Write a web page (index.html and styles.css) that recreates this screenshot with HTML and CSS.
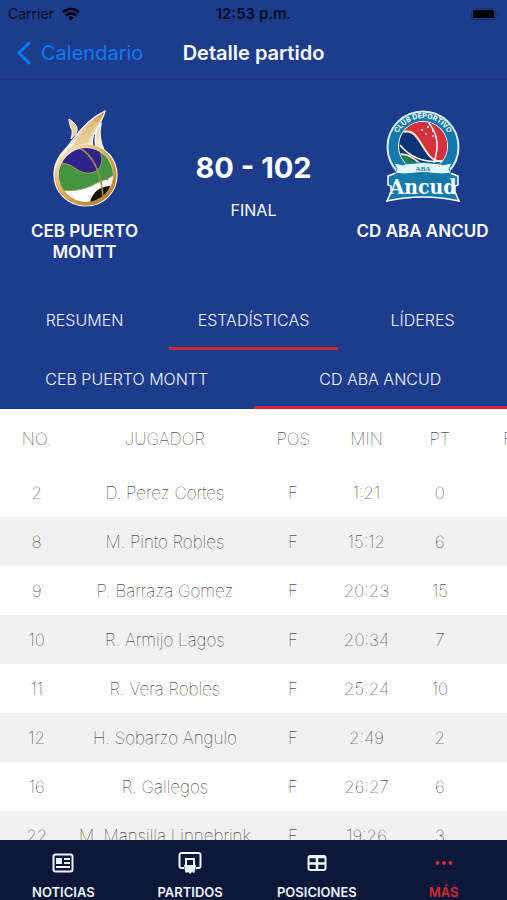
FILE: index.html
```html
<!DOCTYPE html>
<html lang="es">
  <head>
    <meta charset="utf-8">
    <meta name="viewport" content="width=device-width, initial-scale=1">
    <title>Detalle partido</title>
    <link rel="stylesheet" href="styles.css">
  </head>
  <body>
    <div class="status">
      <span class="carrier">Carrier
        <svg width="18" height="14" viewBox="0 0 18 14" fill="none" stroke="#000" stroke-width="2.6">
          <path d="M1 5.200a11.500 11.500 0 0 1 16 0M4 8.400a7.200 7.200 0 0 1 10 0"/>
          <path d="M9 13.500L6.200 10.600a4 4 0 0 1 5.600 0z" fill="#000" stroke="none"/>
        </svg>
      </span>
      <span class="clock">12:53 p.m.</span>
      <svg class="battery" width="28" height="12" viewBox="0 0 28 12">
        <rect x="0.500" y="0.500" width="24" height="11" rx="3" fill="none" stroke="#152c68"/>
        <rect x="2" y="2" width="21" height="8" rx="1.500" fill="#000"/>
        <path d="M26 4v4c1.500-.5 1.500-3.500 0-4z" fill="#152c68"/>
      </svg>
    </div>
    <header class="navbar">
      <a class="back" href="#">
        <svg width="14" height="24" viewBox="0 0 14 24" fill="none" stroke="#0a7bf5" stroke-width="3" stroke-linecap="round" stroke-linejoin="round">
          <path d="M12 2L2 12l10 10"/>
        </svg>
        Calendario
      </a>
      <h1>Detalle partido</h1>
    </header>

    <section class="match">
      <div class="team">
        <svg width="66" height="99" viewBox="0 0 66 99">
          <defs>
            <linearGradient id="flame" x1="0" y1="0" x2="0" y2="1">
              <stop offset="0" stop-color="#c08a3a"/>
              <stop offset="0.150" stop-color="#e3c78c"/>
              <stop offset="0.400" stop-color="#fdf8e8"/>
              <stop offset="0.600" stop-color="#f0dcae"/>
              <stop offset="0.800" stop-color="#c8923a"/>
              <stop offset="1" stop-color="#a8701c"/>
            </linearGradient>
            <linearGradient id="gold" x1="0" y1="0" x2="1" y2="1">
              <stop offset="0" stop-color="#fbf1d4"/>
              <stop offset="0.400" stop-color="#dcb668"/>
              <stop offset="1" stop-color="#b0781c"/>
            </linearGradient>
            <clipPath id="ball"><circle cx="34" cy="67" r="27"/></clipPath>
          </defs>
          <path d="M17 11c4 3 9 6 8 12-1 4-4 5-6 8 1-5 2-7 0-11-1-3-2-6-2-9z" fill="#e9d3a0" stroke="#fff"/>
          <path d="M53 3C40 9 29 20 19 34 14 42 8 45 5 53c-2 4-3 9-3 14 0 17 14 31 32 31s31-14 31-31c0-8-3-15-7-20l-6-5c-4-9-5-17-3-26-6 6-7 15-5 25l-3-1c-4-14 8-21 12-37z" fill="url(#flame)" stroke="#fff" stroke-width="1.200"/>
          <path d="M50 7c-6 10-12 16-13 28-6 0-12 2-18 6C27 27 37 15 50 7z" fill="#d9b671" opacity="0.500"/>
          <circle cx="34" cy="67" r="29" fill="none" stroke="url(#gold)" stroke-width="3"/>
          <g clip-path="url(#ball)">
            <path d="M4 38h60v60H4z" fill="#fff"/>
            <path d="M4 38h52v34H4z" fill="#2e2488"/>
            <path d="M4 57c17-6 18 9 34 8 11-1 15-13 9-23l19 3v18c-8 9-16 9-23 13-9 5-20 8-36 6z" fill="#449440" stroke="#a99b58"/>
            <path d="M37 97c3-12 9-18 21-19l-3 19H37z" fill="#16120d"/>
            <path d="M27 40c12 5 24 24 24 54" fill="none" stroke="#a78c51" stroke-width="1.500"/>
          </g>
        </svg>
        <h2>CEB PUERTO MONTT</h2>
      </div>
      <div class="result">
        <strong>80 - 102</strong>
        <span>FINAL</span>
      </div>
      <div class="team">
        <svg width="76" height="99" viewBox="0 0 76 99">
          <defs>
            <path id="arc" d="M10 44a28.500 28.500 0 1 1 56 0"/>
            <clipPath id="ancud"><circle cx="38" cy="38" r="24"/></clipPath>
          </defs>
          <circle cx="38" cy="39" r="35.500" fill="#1679ab" stroke="#d8f1f6" stroke-width="2"/>
          <circle cx="38" cy="38" r="25" fill="#fff"/>
          <g clip-path="url(#ancud)">
            <path d="M12 12h52v52H12z" fill="#0c3278"/>
            <path d="M19 24c17-6 19 32 38 29l9-4V10H25z" fill="#d82f3d"/>
            <path d="M10 47c12-4 20 10 32 15H12z" fill="#16834b"/>
            <path d="M19 24c17-6 19 32 38 29M12 47c12-4 20 8 30 13" fill="none" stroke="#f5e7b5" stroke-width="2"/>
            <path d="M41 12c13 13 14 28 6 48M15 37c13 16 30 19 50 15" fill="none" stroke="#fff" stroke-width="1.500"/>
          </g>
          <g fill="#fff">
            <circle cx="37" cy="22" r="1"/><circle cx="43" cy="19" r="1"/><circle cx="41" cy="26" r="1"/><circle cx="48" cy="23" r="1"/><circle cx="48" cy="28" r="1"/>
          </g>
          <text class="arc-text"><textPath href="#arc" startOffset="50%">CLUB DEPORTIVO</textPath></text>
          <path d="M3 68l8-3v-7h54v7l8 3v9l-3 1v6l4 9q-36-8-72 0l4-9v-6l-3-1z" fill="#1679ab" stroke="#fff" stroke-width="1.500"/>
          <path d="M9 55l10 2v-1q19-3 38 0v1l10-2-3 6 2 4-9 1q-19-3-38 0l-9-1 2-4z" fill="#e4f7fb" stroke="#1679ab"/>
          <text class="aba-text" x="38" y="63">ABA</text>
          <text class="ancud-text" x="38" y="86">Ancud</text>
        </svg>
        <h2>CD ABA ANCUD</h2>
      </div>
    </section>

    <nav class="tabs">
      <button type="button">RESUMEN</button>
      <button type="button" class="active">ESTADÍSTICAS</button>
      <button type="button">LÍDERES</button>
    </nav>
    <nav class="tabs">
      <button type="button">CEB PUERTO MONTT</button>
      <button type="button" class="active">CD ABA ANCUD</button>
    </nav>

    <main class="stats">
      <table>
        <thead>
          <tr><th>NO.</th><th class="player">JUGADOR</th><th>POS</th><th>MIN</th><th>PT</th><th>FT</th></tr>
        </thead>
        <tbody>
          <tr><td>2</td><td>D. Perez Cortes</td><td>F</td><td>1:21</td><td>0</td><td></td></tr>
          <tr><td>8</td><td>M. Pinto Robles</td><td>F</td><td>15:12</td><td>6</td><td></td></tr>
          <tr><td>9</td><td>P. Barraza Gomez</td><td>F</td><td>20:23</td><td>15</td><td></td></tr>
          <tr><td>10</td><td>R. Armijo Lagos</td><td>F</td><td>20:34</td><td>7</td><td></td></tr>
          <tr><td>11</td><td>R. Vera Robles</td><td>F</td><td>25:24</td><td>10</td><td></td></tr>
          <tr><td>12</td><td>H. Sobarzo Angulo</td><td>F</td><td>2:49</td><td>2</td><td></td></tr>
          <tr><td>16</td><td>R. Gallegos</td><td>F</td><td>26:27</td><td>6</td><td></td></tr>
          <tr><td>22</td><td>M. Mansilla Linnebrink</td><td>F</td><td>19:26</td><td>3</td><td></td></tr>
        </tbody>
      </table>
    </main>

    <nav class="tabbar">
      <a href="#">
        <svg width="24" height="24" viewBox="0 0 24 24" fill="none" stroke="currentColor" stroke-width="2">
          <rect x="2.500" y="3.500" width="19" height="17" rx="2"/>
          <path d="M13 8h6M13 12h6M5 16h14"/>
          <path d="M5 7h6v6H5z" fill="currentColor" stroke="none"/>
        </svg>
        NOTICIAS
      </a>
      <a href="#">
        <svg width="24" height="24" viewBox="0 0 24 24" fill="none" stroke="currentColor" stroke-width="2">
          <path d="M6 17H3.500a2 2 0 0 1-2-2V4a2 2 0 0 1 2-2h17a2 2 0 0 1 2 2v11a2 2 0 0 1-2 2H18"/>
          <path d="M8 15V8h8v7"/>
          <path d="M6 14h12l-1 6-1 2-2-1-2 2-2-2-2 1-1-2z" fill="currentColor" stroke="none"/>
        </svg>
        PARTIDOS
      </a>
      <a href="#">
        <svg width="24" height="24" viewBox="0 0 24 24" fill="none" stroke="currentColor" stroke-width="2">
          <rect x="3.500" y="5" width="17" height="14" rx="2"/>
          <path d="M4 6h16M4 12.500h16M12 5v14" stroke-width="2.500"/>
        </svg>
        POSICIONES
      </a>
      <a href="#" class="active">
        <svg width="24" height="24" viewBox="0 0 24 24" fill="currentColor">
          <circle cx="5.500" cy="12" r="2"/><circle cx="12" cy="12" r="2"/><circle cx="18.500" cy="12" r="2"/>
        </svg>
        MÁS
      </a>
    </nav>
  </body>
</html>
```
FILE: styles.css
```css
* {
  box-sizing: border-box;
}

body {
  display: flex;
  flex-direction: column;
  height: 100vh;
  margin: 0;
  overflow: hidden;
  background-color: #1e3c8c;
  color: #fff;
  font-family: Inter, "Liberation Sans", sans-serif;
}

h1, h2 {
  margin: 0;
  font-weight: 600;
}

a {
  text-decoration: none;
}

/* top bars */
.status, .navbar {
  display: grid;
  grid-template-columns: 1fr auto 1fr;
  align-items: center;
  flex: none;
}

.status {
  height: 27px;
  padding: 0 8px;
  color: #060c1c;
  font-size: 14px;
}

.carrier {
  display: flex;
  align-items: center;
  gap: 8px;
}

.clock {
  font-size: 15px;
  font-weight: 600;
}

.battery {
  justify-self: end;
}

.navbar {
  height: 53px;
  padding: 0 17px;
  border-bottom: 1px solid #1b377f;
}

.navbar h1 {
  font-size: 20px;
}

.back {
  display: flex;
  align-items: center;
  gap: 10px;
  color: #0a7bf5;
  font-size: 20px;
}

/* score */
.match {
  display: grid;
  grid-template-columns: repeat(3, 1fr);
  flex: none;
  height: 211px;
  padding-top: 28px;
}

.team, .result {
  display: flex;
  flex-direction: column;
  align-items: center;
  text-align: center;
}

.team {
  gap: 14px;
}

.team h2 {
  max-width: 140px;
  font-size: 17px;
  line-height: 21px;
}

.result {
  padding-top: 40px;
  gap: 12px;
}

.result strong {
  font-size: 29px;
  line-height: 40px;
}

.result span {
  font-size: 16px;
  line-height: 20px;
}

.arc-text, .aba-text, .ancud-text {
  fill: #fff;
  font-weight: 700;
  text-anchor: middle;
}

.arc-text {
  font-size: 7px;
}

.aba-text {
  fill: #1679ab;
  font-family: "Liberation Serif", serif;
  font-size: 7px;
}

.ancud-text {
  font-family: "DejaVu Serif Condensed", "DejaVu Serif", serif;
  font-size: 21px;
}

/* tabs */
.tabs {
  display: flex;
  flex: none;
  height: 59px;
}

.tabs button {
  flex: 1;
  padding: 2px 0 0;
  border: 0;
  border-bottom: 3px solid transparent;
  background: none;
  color: #f0f4ff;
  font: 300 16px Inter, "Liberation Sans", sans-serif;
}

.tabs .active {
  border-color: #cf2a35;
}

/* stats */
.stats {
  flex: 1;
  min-height: 0;
  overflow: hidden;
  background-color: #fff;
}

table {
  width: 550px;
  table-layout: fixed;
  border-collapse: collapse;
  color: #000;
  font-size: 17px;
}

th, td {
  height: 49px;
  padding: 0;
  font-weight: 100;
  text-align: center;
}

th {
  height: 59px;
}

.player {
  width: 183px;
}

tbody tr:nth-child(even) {
  background-color: #f1f1f1;
}

/* bottom bar */
.tabbar {
  display: flex;
  flex: none;
  height: 60px;
  padding-top: 11px;
  background-color: #0b1838;
}

.tabbar a {
  display: flex;
  flex: 1;
  flex-direction: column;
  align-items: center;
  gap: 9px;
  color: #eef4ff;
  font-size: 13px;
  font-weight: 600;
  line-height: 16px;
}

.tabbar .active {
  color: #d62b32;
}
```
